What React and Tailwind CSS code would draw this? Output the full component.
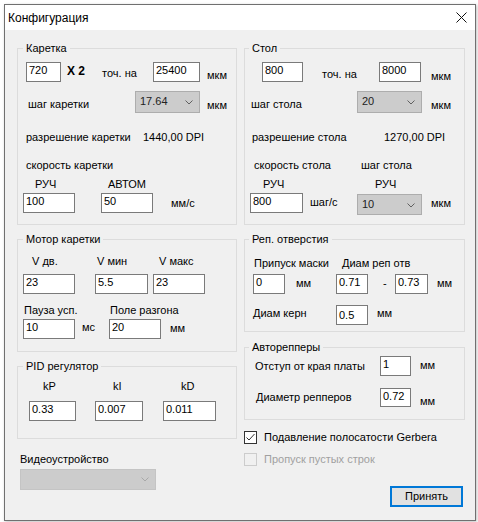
import React from "react";

function L({ className = "", children }) {
  return <div className={"shrink-0 whitespace-nowrap " + className}>{children}</div>;
}

function TB({ className = "", children }) {
  return (
    <div className={"shrink-0 h-[20px] border border-[#7a7a7a] bg-white pl-[2px] pt-[1px] whitespace-nowrap " + className}>
      {children}
    </div>
  );
}

function Chevron({ color = "#606060" }) {
  return (
    <svg width="8" height="5" viewBox="0 0 8 5" className="shrink-0">
      <path d="M0.5 0.5 L4 4 L7.5 0.5" fill="none" stroke={color} strokeWidth="1" />
    </svg>
  );
}

function CB({ className = "", children }) {
  return (
    <div className={"shrink-0 flex justify-between border border-[#adadad] bg-[#cccccc] text-[#222] " + className}>
      <span className="pl-[4px] pt-[3px]">{children}</span>
      <span className="pr-[6px] pt-[8px]">
        <Chevron />
      </span>
    </div>
  );
}

function Group({ title, right, className = "", children }) {
  return (
    <div className={"relative border border-[#dcdcdc] " + className}>
      <span className={"absolute -top-[7px] bg-[#f0f0f0] px-[3px] whitespace-nowrap " + (right ? "left-[4px]" : "left-[5px]")}>
        {title}
      </span>
      {children}
    </div>
  );
}

function Check({ checked, disabled, children }) {
  return (
    <div className="flex items-start">
      <div
        className={
          "w-[13px] h-[13px] border shrink-0 " +
          (disabled ? "border-[#cccccc] bg-[#f0f0f0]" : "border-[#333333] bg-white")
        }
      >
        {checked && (
          <svg width="11" height="11" viewBox="0 0 11 11">
            <polyline points="1.5,5.5 4,8 9.5,2" fill="none" stroke="#333" strokeWidth="1" />
          </svg>
        )}
      </div>
      <L className={"ml-[7px] " + (disabled ? "text-[#a0a0a0]" : "")}>{children}</L>
    </div>
  );
}

export default function App() {
  return (
    <div className="w-[478px] h-[522px] overflow-hidden bg-white font-['Liberation_Sans',Arial,sans-serif] text-[11px] leading-[13px] text-black">
      <div className="ml-[4px] mt-[4px] w-[472px] h-[517px] border border-[#707070] flex flex-col shadow-[1px_1px_3px_rgba(0,0,0,0.25)]">
        {/* title bar */}
        <div className="h-[25px] shrink-0 bg-white flex items-center justify-between pl-[3px] pr-[8px]">
          <span className="text-[12px] leading-[16px]">Конфигурация</span>
          <svg width="11" height="11" viewBox="0 0 11 11">
            <path d="M0.5 0.5 L10.5 10.5 M10.5 0.5 L0.5 10.5" stroke="#111" strokeWidth="1" />
          </svg>
        </div>

        <div className="flex-1 bg-[#f0f0f0] flex pl-[12px] pt-[18px] gap-[7px]">
          {/* left column */}
          <div className="w-[220px] flex flex-col">
            <Group title="Каретка" className="h-[177px]">
              <div className="flex items-start mt-[13px] h-[20px]">
                <TB className="ml-[8px] w-[35px]">720</TB>
                <L className="ml-[6px] w-[35px] mt-[3px] font-bold text-[12px]">X 2</L>
                <L className="w-[51px] mt-[5px]">точ. на</L>
                <TB className="w-[47px]">25400</TB>
                <L className="ml-[7px] mt-[7px]">мкм</L>
              </div>
              <div className="flex items-start mt-[9px] h-[22px]">
                <L className="ml-[10px] w-[107px] mt-[7px]">шаг каретки</L>
                <CB className="w-[65px] h-[22px]">17.64</CB>
                <L className="ml-[7px] mt-[8px]">мкм</L>
              </div>
              <div className="flex mt-[18px]">
                <L className="ml-[8px] w-[117px]">разрешение каретки</L>
                <L>1440,00 DPI</L>
              </div>
              <L className="ml-[8px] mt-[15px]">скорость каретки</L>
              <div className="flex mt-[6px]">
                <L className="ml-[17px] w-[73px]">РУЧ</L>
                <L>АВТОМ</L>
              </div>
              <div className="flex items-start mt-[2px] h-[20px]">
                <TB className="ml-[5px] w-[52px]">100</TB>
                <TB className="ml-[26px] w-[52px]">50</TB>
                <L className="ml-[18px] mt-[4px]">мм/с</L>
              </div>
            </Group>

            <Group title="Мотор каретки" className="mt-[14px] h-[113px]">
              <div className="flex mt-[15px]">
                <L className="ml-[14px] w-[65px]">V дв.</L>
                <L className="w-[62px]">V мин</L>
                <L>V макс</L>
              </div>
              <div className="flex items-start mt-[6px] h-[20px]">
                <TB className="ml-[5px] w-[52px]">23</TB>
                <TB className="ml-[20px] w-[53px]">5.5</TB>
                <TB className="ml-[5px] w-[52px]">23</TB>
              </div>
              <div className="flex mt-[10px]">
                <L className="ml-[6px] w-[86px]">Пауза усп.</L>
                <L>Поле разгона</L>
              </div>
              <div className="flex items-start mt-[2px] h-[20px]">
                <TB className="ml-[5px] w-[52px]">10</TB>
                <L className="ml-[7px] w-[27px] mt-[2px]">мс</L>
                <TB className="w-[52px]">20</TB>
                <L className="ml-[9px] mt-[3px]">мм</L>
              </div>
            </Group>

            <Group title="PID регулятор" className="mt-[14px] h-[73px]">
              <div className="flex mt-[13px]">
                <L className="ml-[25px] w-[70px]">kP</L>
                <L className="w-[68px]">kI</L>
                <L>kD</L>
              </div>
              <div className="flex items-start mt-[8px] h-[20px]">
                <TB className="ml-[11px] w-[47px]">0.33</TB>
                <TB className="ml-[19px] w-[48px]">0.007</TB>
                <TB className="ml-[20px] w-[53px]">0.011</TB>
              </div>
            </Group>

            <L className="ml-[3px] mt-[14px]">Видеоустройство</L>
            <div className="ml-[3px] mt-[3px] w-[136px] h-[21px] border border-[#c4c4c4] bg-[#cccccc] flex justify-end items-center pr-[6px]">
              <Chevron color="#a8a8a8" />
            </div>
          </div>

          {/* right column */}
          <div className="w-[221px] flex flex-col">
            <Group title="Стол" right className="h-[177px]">
              <div className="flex items-start mt-[13px] h-[20px]">
                <TB className="ml-[17px] w-[41px]">800</TB>
                <L className="ml-[19px] w-[57px] mt-[6px]">точ. на</L>
                <TB className="w-[42px]">8000</TB>
                <L className="ml-[10px] mt-[8px]">мкм</L>
              </div>
              <div className="flex items-start mt-[9px] h-[22px]">
                <L className="ml-[6px] w-[106px] mt-[7px]">шаг стола</L>
                <CB className="w-[65px] h-[22px]">20</CB>
                <L className="ml-[9px] mt-[8px]">мкм</L>
              </div>
              <div className="flex mt-[18px]">
                <L className="ml-[7px] w-[132px]">разрешение стола</L>
                <L>1270,00 DPI</L>
              </div>
              <div className="flex mt-[15px]">
                <L className="ml-[9px] w-[107px]">скорость стола</L>
                <L>шаг стола</L>
              </div>
              <div className="flex mt-[6px]">
                <L className="ml-[18px] w-[112px]">РУЧ</L>
                <L>РУЧ</L>
              </div>
              <div className="flex items-start mt-[2px] h-[21px]">
                <TB className="ml-[5px] w-[53px]">800</TB>
                <L className="ml-[7px] w-[47px] mt-[3px]">шаг/с</L>
                <CB className="w-[65px] h-[21px] mt-[1px]">10</CB>
                <L className="ml-[9px] mt-[4px]">мкм</L>
              </div>
            </Group>

            <Group title="Реп. отверстия" right className="mt-[14px] h-[93px]">
              <div className="flex mt-[17px]">
                <L className="ml-[9px] w-[88px]">Припуск маски</L>
                <L>Диам реп отв</L>
              </div>
              <div className="flex items-start mt-[4px] h-[20px]">
                <TB className="ml-[8px] w-[32px]">0</TB>
                <L className="ml-[11px] w-[40px] mt-[3px]">мм</L>
                <TB className="w-[32px]">0.71</TB>
                <L className="ml-[15px] w-[12px] mt-[3px]">-</L>
                <TB className="w-[33px]">0.73</TB>
                <L className="ml-[9px] mt-[3px]">мм</L>
              </div>
              <div className="flex items-start mt-[11px] h-[20px]">
                <L className="ml-[8px] w-[83px] mt-[2px]">Диам керн</L>
                <TB className="w-[32px] pt-[3px]">0.5</TB>
                <L className="ml-[9px] mt-[2px]">мм</L>
              </div>
            </Group>

            <Group title="Авторепперы" right className="mt-[15px] h-[73px]">
              <div className="flex items-start mt-[8px] h-[20px]">
                <L className="ml-[10px] w-[125px] mt-[4px]">Отступ от края платы</L>
                <TB className="w-[31px]">1</TB>
                <L className="ml-[9px] mt-[3px]">мм</L>
              </div>
              <div className="flex items-start mt-[12px] h-[19px]">
                <L className="ml-[11px] w-[124px] mt-[3px]">Диаметр репперов</L>
                <TB className="w-[31px] !h-[19px]">0.72</TB>
                <L className="ml-[9px] mt-[7px]">мм</L>
              </div>
            </Group>

            <div className="mt-[11px]">
              <Check checked>Подавление полосатости Gerbera</Check>
            </div>
            <div className="mt-[9px]">
              <Check disabled>Пропуск пустых строк</Check>
            </div>
            <div className="mt-[20px] flex justify-end pr-[2px]">
              <div className="w-[73px] h-[21px] border-2 border-[#0078d7] bg-[#e1e1e1] flex items-center justify-center">
                Принять
              </div>
            </div>
          </div>
        </div>
      </div>
    </div>
  );
}
